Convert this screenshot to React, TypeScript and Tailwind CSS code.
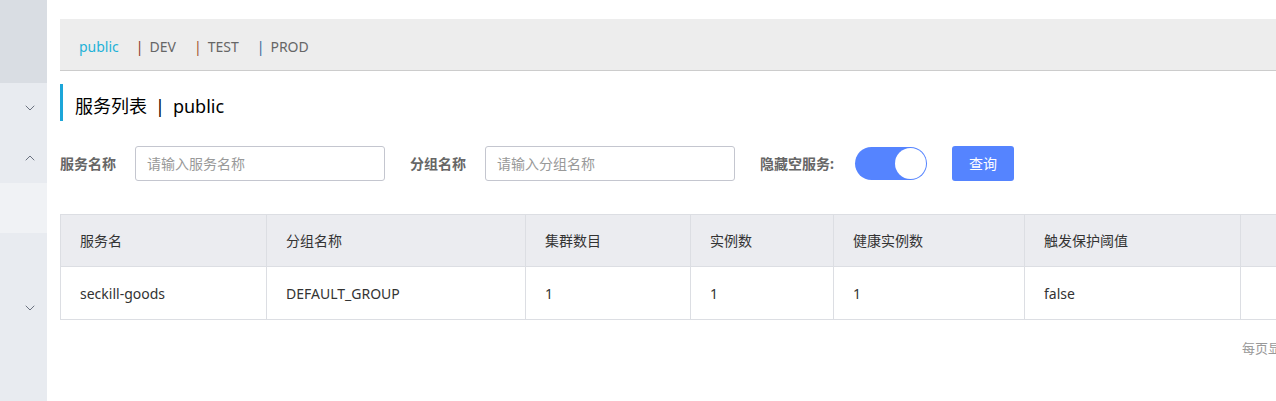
import { ChevronDown, ChevronUp } from "lucide-react";

const columns = [
  { title: "服务名", w: "w-[206px]" },
  { title: "分组名称", w: "w-[259px]" },
  { title: "集群数目", w: "w-[165px]" },
  { title: "实例数", w: "w-[143px]" },
  { title: "健康实例数", w: "w-[191px]" },
  { title: "触发保护阈值", w: "w-[216px]" },
  { title: "操作", w: "w-[200px]" },
];

const row = ["seckill-goods", "DEFAULT_GROUP", "1", "1", "1", "false", ""];

const namespaces = [
  { name: "DEV", pipe: "text-[#8b3a24]" },
  { name: "TEST", pipe: "text-[#a0522d]" },
  { name: "PROD", pipe: "text-[#2f6a9c]" },
];

export default function App() {
  return (
    <div
      className="flex h-[401px] w-full overflow-hidden bg-white text-[14px] text-[#333]"
      style={{ fontFamily: '"Noto Sans", "Noto Sans CJK SC", sans-serif' }}
    >
      {/* Sidebar */}
      <div className="flex w-[47px] shrink-0 flex-col bg-[#e8ebf0]">
        <div className="h-[83px] bg-[#d9dde3]" />
        <div className="flex h-[50px] items-center justify-end pr-[9px] text-[#6b7280]">
          <ChevronDown className="h-[16px] w-[16px]" strokeWidth={1.5} />
        </div>
        <div className="flex h-[50px] items-center justify-end pr-[9px] text-[#6b7280]">
          <ChevronUp className="h-[16px] w-[16px]" strokeWidth={1.5} />
        </div>
        <div className="h-[50px] bg-[#f0f2f5]" />
        <div className="flex h-[150px] items-center justify-end pr-[9px] text-[#6b7280]">
          <ChevronDown className="h-[16px] w-[16px]" strokeWidth={1.5} />
        </div>
      </div>

      {/* Main */}
      <div className="min-w-0 flex-1 overflow-hidden pl-[13px] pt-[19px]">
        <div className="w-[1400px]">
          {/* Namespace tabs */}
          <div className="flex h-[52px] items-center border-b border-[#cccccc] bg-[#ededed] pl-[19px] pt-[3px] text-[14px]">
            <span className="mr-[17px] text-[#1fb2d8]">public</span>
            {namespaces.map((ns) => (
              <span key={ns.name} className="mr-[18px] text-[#666]">
                <span className={`mr-[6px] ${ns.pipe}`}>|</span>
                {ns.name}
              </span>
            ))}
          </div>

          {/* Title */}
          <div className="mt-[13px] flex h-[37px] items-center border-l-[3px] border-[#1ca6d9] pl-[12px] pt-[8px] text-[18px] text-black">
            服务列表
            <span className="mx-[8px]">|</span>
            public
          </div>

          {/* Filters */}
          <div className="mt-[25px] flex h-[35px] items-center">
            <span className="mr-[15px] w-[60px] font-bold text-[#666]">服务名称</span>
            <div className="flex h-[35px] w-[250px] items-center rounded-[3px] border border-[#c4c6cf] pl-[11px] text-[#999]">
              请输入服务名称
            </div>
            <span className="ml-[25px] mr-[15px] w-[60px] font-bold text-[#666]">分组名称</span>
            <div className="flex h-[35px] w-[250px] items-center rounded-[3px] border border-[#c4c6cf] pl-[11px] text-[#999]">
              请输入分组名称
            </div>
            <span className="ml-[25px] mr-[15px] w-[80px] font-bold text-[#666]">隐藏空服务:</span>
            <div className="flex h-[33px] w-[72px] items-center justify-end rounded-full bg-[#5584ff] pr-[1px]">
              <div className="h-[31px] w-[31px] rounded-full bg-white" />
            </div>
            <button className="ml-[25px] h-[35px] w-[62px] rounded-[3px] bg-[#5584ff] text-white">
              查询
            </button>
          </div>

          {/* Table */}
          <div className="mt-[33px] border border-[#dcdee3]">
            <div className="flex h-[51px] bg-[#ebecf0]">
              {columns.map((c, i) => (
                <div
                  key={i}
                  className={`${c.w} flex shrink-0 items-center border-r border-[#dcdee3] pl-[19px]`}
                >
                  {i < 6 ? c.title : ""}
                </div>
              ))}
            </div>
            <div className="flex h-[53px] border-t border-[#dcdee3]">
              {columns.map((c, i) => (
                <div
                  key={i}
                  className={`${c.w} flex shrink-0 items-center border-r border-[#dcdee3] pl-[19px]`}
                >
                  {row[i]}
                </div>
              ))}
            </div>
          </div>

          {/* Pagination */}
          <div className="mt-[19px] flex h-[20px] items-center pl-[1182px] text-[13px] text-[#999]">
            每页显示：
          </div>
        </div>
      </div>
    </div>
  );
}
